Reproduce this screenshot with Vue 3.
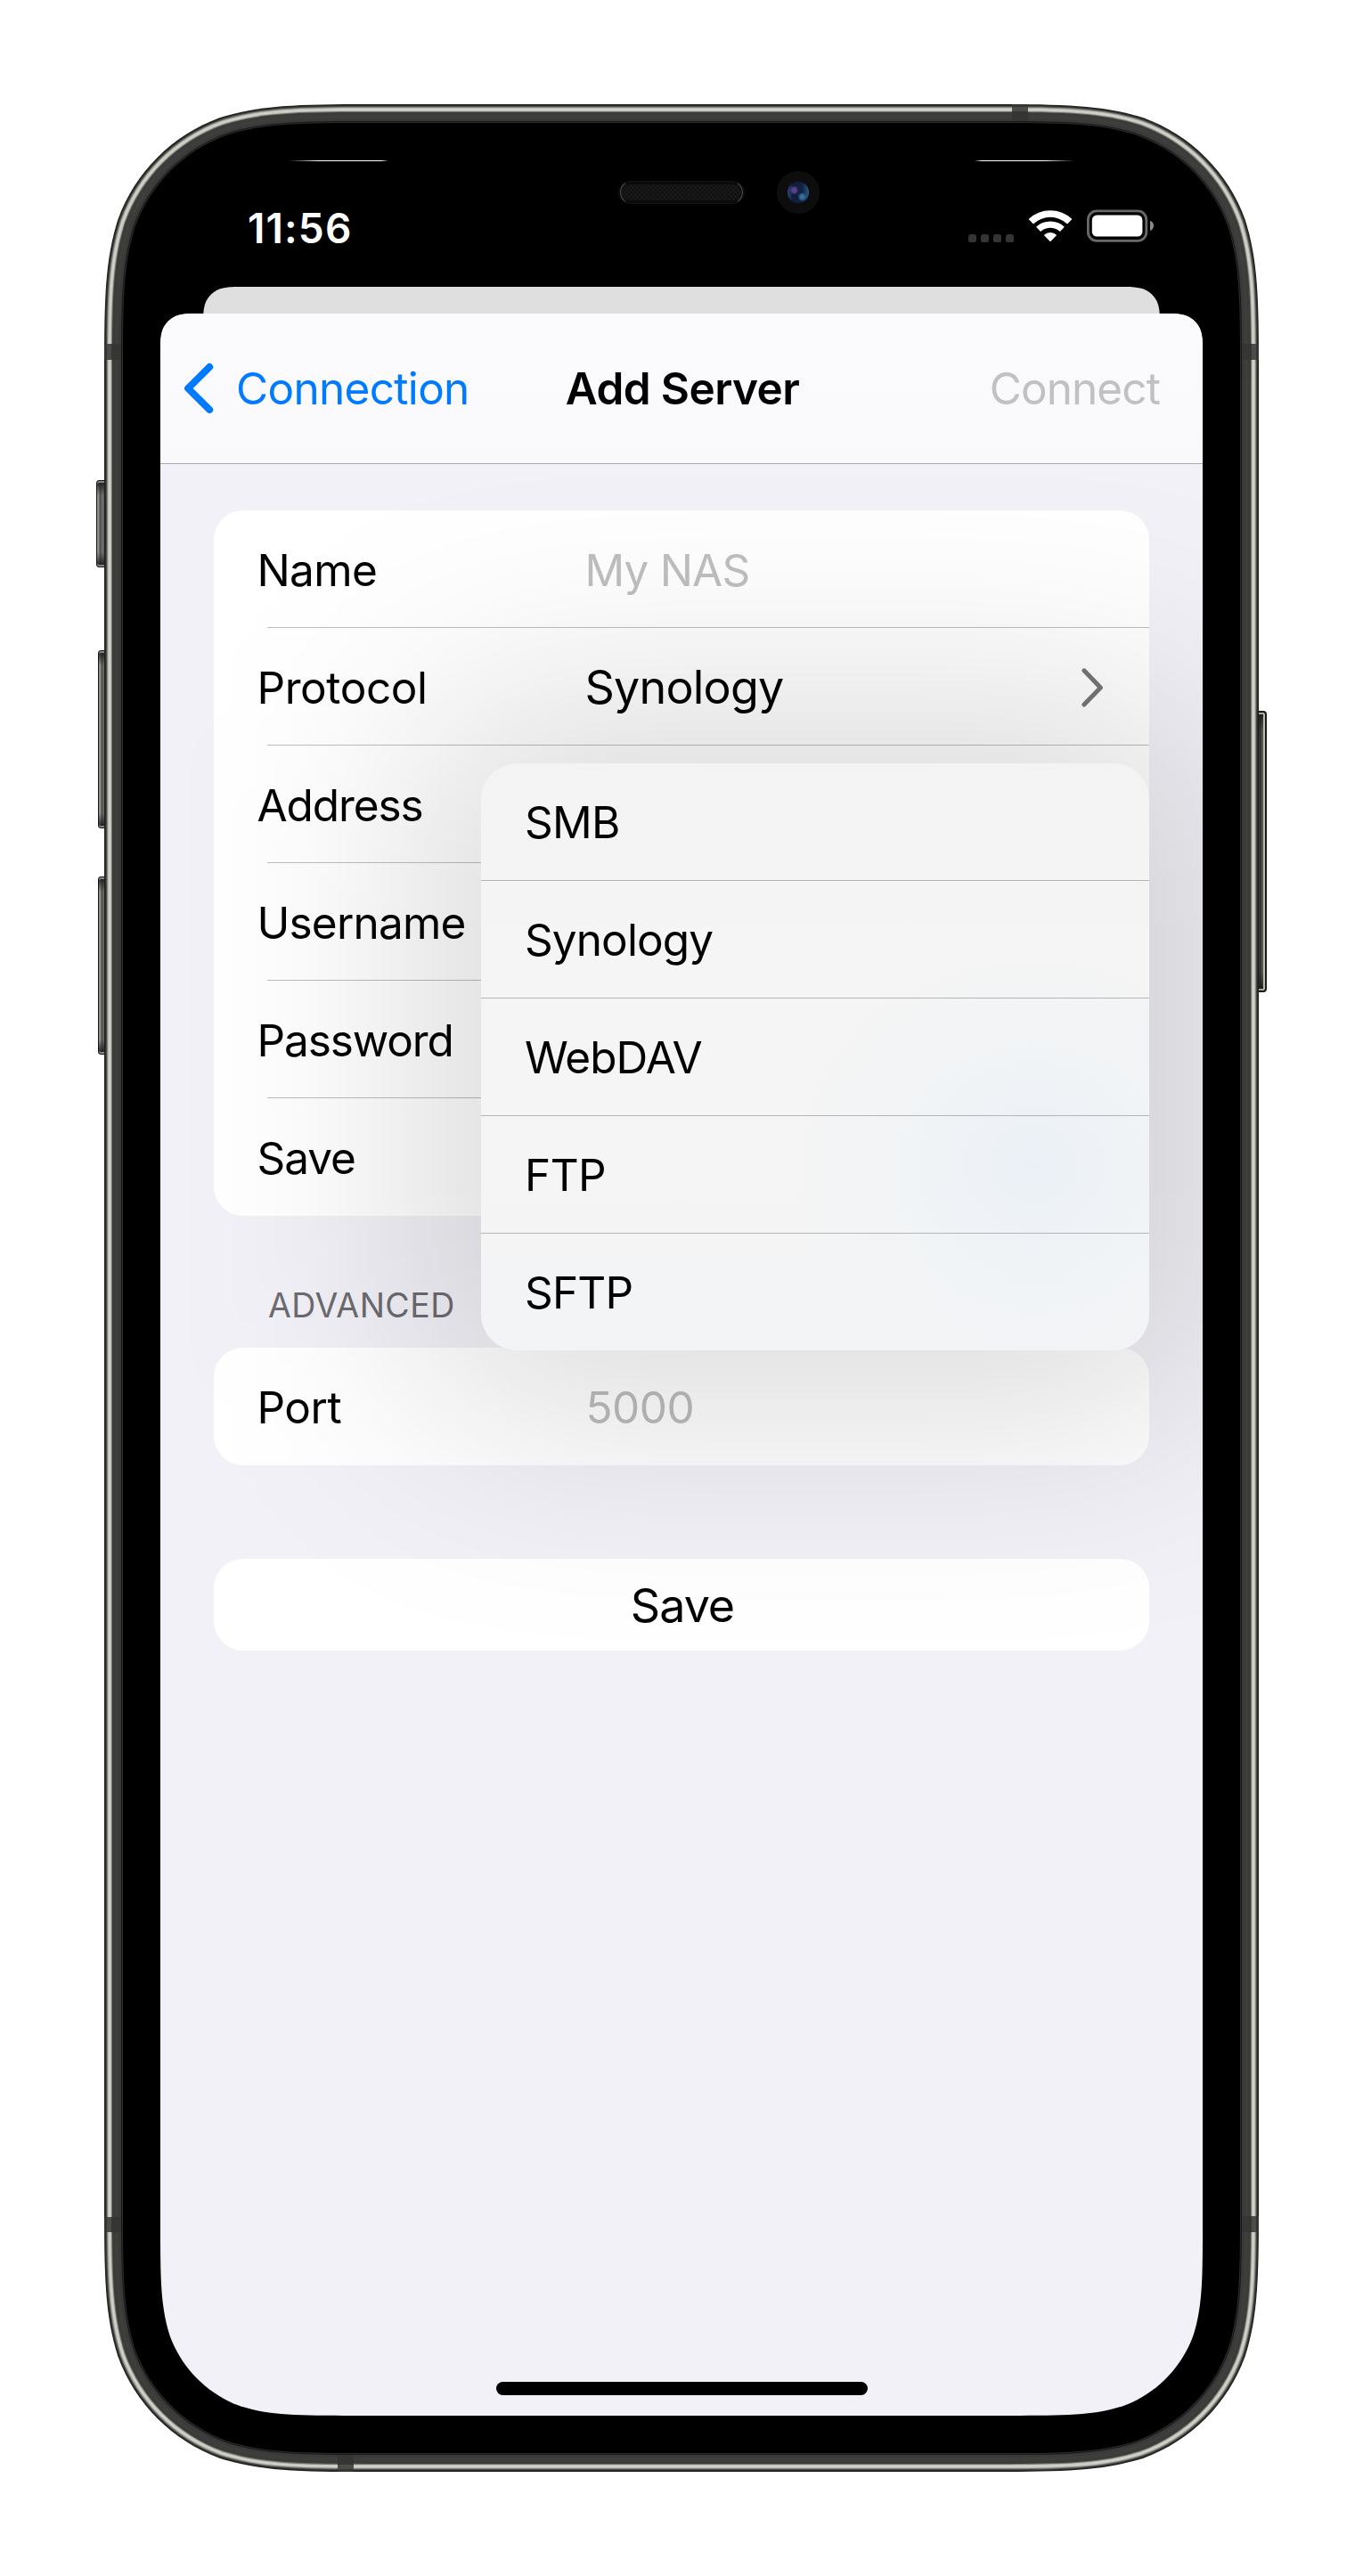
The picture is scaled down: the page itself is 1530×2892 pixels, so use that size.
<script setup>
// Continuous-curvature rounded rectangle, as used for the device body and display.
function squircle(x, y, w, h, rt, rb = rt) {
  const R = x + w
  const B = y + h
  const seq = [
    [1.52866, 0], [1.08849, 0], [0.86841, 0], [0.63149, 0.07491],
    [0.37282, 0.16906], [0.16906, 0.37282], [0.07491, 0.63149],
    [0, 0.86841], [0, 1.08849], [0, 1.52866],
  ]
  const corner = (cx, cy, sx, sy, r, reverse) => {
    const p = (reverse ? [...seq].reverse() : seq)
      .map(([a, b]) => `${(cx + sx * a * r).toFixed(2)} ${(cy + sy * b * r).toFixed(2)}`)
    return `L${p[0]}C${p[1]} ${p[2]} ${p[3]}C${p[4]} ${p[5]} ${p[6]}C${p[7]} ${p[8]} ${p[9]}`
  }
  const d = corner(R, y, -1, 1, rt, false) + corner(R, B, -1, -1, rb, true)
    + corner(x, B, 1, -1, rb, false) + corner(x, y, 1, 1, rt, true)
  return 'M' + d.slice(1) + 'Z'
}

const shell = [
  [0, '#1f1f1f'], [1, '#2d2d2b'], [2, '#4b4b49'], [3, '#85857f'], [4, '#b9bab1'], [5, '#d0d1c8'],
  [7, '#bcbdb5'], [8, '#73736f'], [9, '#3b3b39'], [12, '#3e3e3c'], [16, '#3a3a38'], [19, '#161616'], [20, '#2d2d2d'], [21, '#000'],
].map(([i, fill]) => ({ fill, d: squircle(i, i, 1296 - 2 * i, 2658 - 2 * i, 205 - i) }))

const sheetClip = `path("${squircle(0, 0, 1170, 2360, 30, 142)}")`
const backClip = `path("${squircle(0, 0, 1074, 80, 30, 1)}")`

const fields = [
  { label: 'Name', tracking: -0.68, hint: 'My NAS' },
  { label: 'Protocol', tracking: -0.42, value: 'Synology' },
  { label: 'Address', tracking: -1.1 },
  { label: 'Username', tracking: -0.8 },
  { label: 'Password', tracking: -1.1 },
  { label: 'Save', tracking: -1.06 },
]
const protocols = [
  { name: 'SMB', tracking: -0.74 },
  { name: 'Synology', tracking: -0.9 },
  { name: 'WebDAV', tracking: -0.95 },
  { name: 'FTP', tracking: -0.59 },
  { name: 'SFTP', tracking: -0.81 },
]
const track = (t) => ({ letterSpacing: t + 'px' })
</script>

<template>
  <main class="stage">
    <div class="phone">
      <i class="key mute"></i>
      <i class="key vol-up"></i>
      <i class="key vol-down"></i>
      <i class="key power"></i>

      <svg class="shell" width="1296" height="2658" viewBox="0 0 1296 2658">
        <defs>
          <linearGradient id="glintL"><stop offset="0" stop-color="#fff" stop-opacity="0" /><stop offset=".3" stop-color="#fff" /><stop offset=".93" stop-color="#fff" /><stop offset="1" stop-color="#fff" stop-opacity="0" /></linearGradient>
          <linearGradient id="glintR"><stop offset="0" stop-color="#fff" stop-opacity="0" /><stop offset=".07" stop-color="#fff" /><stop offset=".7" stop-color="#fff" /><stop offset="1" stop-color="#fff" stop-opacity="0" /></linearGradient>
          <radialGradient id="violet"><stop offset="0" stop-color="#60468f" /><stop offset=".55" stop-color="#553b86" /><stop offset="1" stop-color="#5a3f8c" stop-opacity="0" /></radialGradient>
          <radialGradient id="cyan"><stop offset="0" stop-color="#3a78a0" /><stop offset=".5" stop-color="#2f6890" /><stop offset="1" stop-color="#33709a" stop-opacity="0" /></radialGradient>
          <linearGradient id="lens"><stop offset="0" stop-color="#274a78" /><stop offset=".25" stop-color="#121a3a" /><stop offset=".7" stop-color="#122344" /><stop offset="1" stop-color="#2b5c8b" /></linearGradient>
          <pattern id="mesh" width="5" height="5" patternUnits="userSpaceOnUse"><rect width="5" height="5" fill="#101010" /><rect width="2.5" height="2.5" fill="#191919" /><rect x="2.5" y="2.5" width="2.5" height="2.5" fill="#191919" /></pattern>
        </defs>
        <path v-for="(s, i) in shell" :key="i" :d="s.d" :fill="s.fill" />
        <g fill="#353534">
          <rect x="0" y="269" width="19" height="18" />
          <rect x="1277" y="269" width="19" height="18" />
          <rect x="0" y="2372" width="19" height="17" />
          <rect x="1277" y="2371" width="19" height="18" />
          <rect x="1019" y="0" width="18" height="19" />
          <rect x="262" y="2639" width="18" height="19" />
        </g>
        <g fill="#4b4b4a">
          <rect x="3" y="269" width="5" height="18" />
          <rect x="1288" y="269" width="5" height="18" />
          <rect x="3" y="2372" width="5" height="17" />
          <rect x="1288" y="2371" width="5" height="18" />
          <rect x="1019" y="3" width="18" height="5" />
          <rect x="262" y="2650" width="18" height="5" />
        </g>
        <rect x="207" y="63" width="112" height="1" fill="url(#glintL)" />
        <rect x="977" y="63" width="112" height="1" fill="url(#glintR)" />
        <rect x="577.5" y="86.5" width="141" height="25" rx="12.5" fill="#0a0a0a" stroke="#121212" />
        <path d="M585 89a12 12 0 0 0 0 20M711 89a12 12 0 0 1 0 20" fill="none" stroke="#484848" stroke-width="1.2" />
        <rect x="581" y="90" width="134" height="18" rx="9" fill="url(#mesh)" />
        <circle cx="779" cy="99" r="24" fill="#0d0d0d" />
        <circle cx="779" cy="99" r="12" fill="url(#lens)" />
        <circle cx="774.5" cy="96.5" r="5" fill="url(#violet)" />
        <circle cx="783.5" cy="104" r="5" fill="url(#cyan)" />
      </svg>

      <div class="screen">
        <header class="status">
          <span class="time">11:56</span>
          <span class="signals">
            <svg class="cell" width="52" height="9" viewBox="0 0 52 9" fill="#343434">
              <rect width="9" height="9" rx="2.6" /><rect x="14" width="9" height="9" rx="2.6" /><rect x="28" width="9" height="9" rx="2.6" /><rect x="42" width="9" height="9" rx="2.6" />
            </svg>
            <svg class="wifi" width="50" height="37" viewBox="-25 -36.5 50 37" fill="#fff">
              <path d="M-24.4 -25.6A35.8 35.8 0 0 1 24.4 -25.6L19.6 -20.6Q19 -20 18.4 -20.6A27.6 27.6 0 0 0 -18.4 -20.6Q-19 -20 -19.6 -20.6Z" />
              <path d="M-15.9 -16.7A23 23 0 0 1 15.9 -16.7L11.4 -12Q10.8 -11.4 10.2 -12A15.8 15.8 0 0 0 -10.2 -12Q-10.8 -11.4 -11.4 -12Z" />
              <path d="M-7.2 -7.6A10.4 10.4 0 0 1 7.2 -7.6L.6 -.8Q0 -.3 -.6 -.8Z" />
            </svg>
            <svg class="battery" width="76" height="37" viewBox="0 0 76 37">
              <rect x="1.4" y="1.9" width="65.4" height="33.4" rx="9.6" fill="none" stroke="#696969" stroke-width="2.8" />
              <rect x="5.8" y="6.6" width="56.6" height="24" rx="5.4" fill="#fff" />
              <path d="M71 12.8C73.6 13.8 75 16 75 18.4S73.6 23 71 24Z" fill="#8b8b8b" />
            </svg>
          </span>
        </header>

        <div class="back-sheet" :style="{ clipPath: backClip }"></div>
        <section class="sheet" :style="{ clipPath: sheetClip }">
          <nav class="bar">
            <a class="back">
              <svg width="34" height="58" viewBox="0 0 34 58" fill="none" stroke="#007aff" stroke-width="8" stroke-linecap="round" stroke-linejoin="round"><path d="M29.2 5L5.1 29L29.2 53" /></svg>
              <span>Connection</span>
            </a>
            <h1>Add Server</h1>
            <span class="connect">Connect</span>
          </nav>

          <div class="form">
            <div class="card">
              <div v-for="f in fields" :key="f.label" class="row">
                <span class="label" :style="track(f.tracking)">{{ f.label }}</span>
                <span v-if="f.hint" class="hint">{{ f.hint }}</span>
                <span v-if="f.value" class="value">{{ f.value }}</span>
                <svg v-if="f.value" class="chev" width="24" height="44" viewBox="0 0 24 44" fill="none" stroke="#77777a" stroke-width="5" stroke-linecap="round" stroke-linejoin="round"><path d="M2.9 2.8L21.4 21.9L2.9 41" /></svg>
              </div>
            </div>
            <h2>ADVANCED</h2>
            <div class="card">
              <div class="row">
                <span class="label" :style="track(-0.51)">Port</span>
                <span class="hint port">5000</span>
              </div>
            </div>
            <button class="save">Save</button>
          </div>

          <i class="menu-shade"></i>
          <ul class="menu">
            <li v-for="p in protocols" :key="p.name" :style="track(p.tracking)">{{ p.name }}</li>
          </ul>
          <i class="home"></i>
        </section>
      </div>
    </div>
  </main>
</template>

<style>
body { margin: 0; background: #fff; }
</style>

<style scoped>
* { box-sizing: border-box; }
.stage {
  width: 1530px;
  height: 2892px;
  padding: 117px;
  background: #fff;
  font-family: Inter, "Liberation Sans", sans-serif;
  font-size: 49.5px;
  color: #000;
}
.phone { position: relative; width: 1296px; height: 2658px; }
.shell { position: absolute; inset: 0; }
.key {
  position: absolute;
  width: 12px;
  border: 1px solid #161616;
  border-radius: 3px 0 0 3px;
  background: linear-gradient(#1c1c1a, transparent 16px, transparent calc(100% - 16px), #1c1c1a), linear-gradient(90deg, #8f908a 0 2px, #4a4b48 3px, #72736f 6px, #444 100%);
  box-shadow: inset 0 2px 0 #85867f, inset 0 -2px 0 #85867f;
}
.mute { left: -9px; top: 422px; height: 98px; }
.vol-up { left: -7px; top: 613px; height: 200px; }
.vol-down { left: -7px; top: 867px; height: 200px; }
.power {
  left: 1293px;
  top: 681px;
  height: 316px;
  border-width: 2px;
  border-color: #191917;
  border-radius: 0 4px 4px 0;
  background: linear-gradient(#1c1c1a, transparent 20px, transparent calc(100% - 20px), #1c1c1a), linear-gradient(90deg, #333 0 3px, #5b5b59 5px, #3a3a38 100%);
  box-shadow: inset -2px 0 0 #b9bab0, inset 0 2px 0 #a5a69d, inset 0 -2px 0 #a5a69d;
}
.screen {
  position: relative;
  width: 1170px;
  height: 2658px;
  margin: 0 63px;
  display: flex;
  flex-direction: column;
}
.status {
  height: 205px;
  padding: 115px 54px 0 98px;
  display: flex;
  justify-content: space-between;
}
.time {
  font-size: 46px;
  font-weight: 600;
  letter-spacing: 1.1px;
  line-height: 48px;
  color: #fff;
}
.signals { display: flex; padding-top: 3px; }
.cell { margin: 28px 15px 0 0; }
.wifi { margin-right: 16px; }
.back-sheet {
  width: 1074px;
  height: 80px;
  margin: 0 48px -50px;
  flex: none;
  background: #dfdfdf;
}
.sheet {
  position: relative;
  width: 1170px;
  height: 2360px;
  flex: none;
  background: #f2f1f7;
}
.bar {
  position: relative;
  z-index: 3;
  height: 169px;
  padding: 0 48px 0 26px;
  border-bottom: 1px solid #a9a9ac;
  background: linear-gradient(#fbfbfd, #f9f9fb);
  display: grid;
  grid-template-columns: 1fr auto 1fr;
  align-items: center;
}
.back { display: flex; align-items: center; gap: 25px; color: #007aff; letter-spacing: -0.69px; }
h1 { margin: 0; font-size: 49.5px; font-weight: 600; letter-spacing: -0.59px; transform: translateX(12px); }
.connect { justify-self: end; color: #c1c1c3; letter-spacing: -0.9px; }
.form { padding: 52px 60px 0; display: flex; flex-direction: column; }
.card { background: #fff; border-radius: 33px; }
.row {
  position: relative;
  height: 132px;
  padding: 2px 52px 0 48.5px;
  display: flex;
  align-items: center;
}
.row:not(:last-child)::after {
  content: "";
  position: absolute;
  left: 60px;
  right: 0;
  bottom: 0;
  height: 1px;
  background: #bdbdbf;
}
.label { width: 368px; }
.hint { color: #bfbfbf; letter-spacing: -0.85px; }
.port { color: #bdbdbd; letter-spacing: -0.52px; padding-left: 1px; }
.value { font-size: 52px; letter-spacing: -0.8px; margin-top: -1px; }
.chev { margin: -1px 0 0 auto; }
h2 {
  margin: 78px 0 0 61px;
  height: 70px;
  font-size: 37.5px;
  font-weight: 400;
  line-height: 45px;
  letter-spacing: 0.45px;
  color: #6c6c70;
}
.save {
  height: 103px;
  margin-top: 105px;
  padding: 1px 0 0 2px;
  border: 0;
  border-radius: 33px;
  background: #fff;
  font: 400 52px Inter, "Liberation Sans", sans-serif;
  letter-spacing: -1px;
  color: #000;
}
.menu-shade {
  position: absolute;
  z-index: 1;
  left: 290px;
  top: 435px;
  width: 890px;
  height: 799px;
  border-radius: 80px;
  background: rgba(0, 0, 0, 0.14);
  filter: blur(128px);
}
.menu {
  position: absolute;
  z-index: 2;
  left: 360px;
  top: 505px;
  width: 750px;
  margin: 0;
  padding: 0;
  list-style: none;
  border-radius: 40px;
  background:
    radial-gradient(ellipse 270px 240px at 620px 450px, rgba(230, 238, 247, 0.65), rgba(235, 241, 246, 0.45) 50%, rgba(240, 243, 246, 0)),
    linear-gradient(#f3f3f3, #f5f5f5 30%, #f5f5f5 70%, #f3f4f6);
}
.menu li {
  height: 132px;
  padding: 1px 48px 0 49px;
  line-height: 131px;
  border-bottom: 1px solid #b5b5b8;
}
.menu li:last-child { height: 131px; border-bottom: 0; }
.home {
  position: absolute;
  left: 377px;
  bottom: 23px;
  width: 417px;
  height: 15px;
  border-radius: 8px;
  background: #000;
}
</style>
